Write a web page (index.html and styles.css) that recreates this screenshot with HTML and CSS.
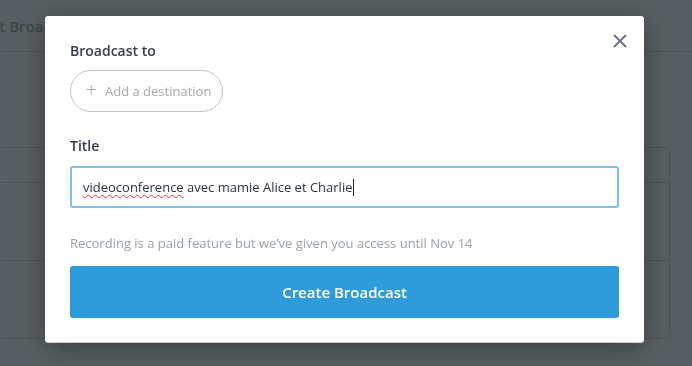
FILE: index.html
```html
<!DOCTYPE html>
<html lang="en">
<head>
<meta charset="utf-8">
<title>Create Broadcast</title>
<link rel="stylesheet" href="styles.css">
</head>
<body>
<div class="page">
  <header class="page-header"><h1 class="page-title">Start Broadcasts</h1></header>
  <div class="card">
    <div class="card-row card-head"></div>
    <div class="card-row"><span class="kebab">⋮</span></div>
    <div class="card-row"><span class="kebab">⋮</span></div>
  </div>
</div>
<div class="overlay">
  <div class="modal">
    <button class="close" aria-label="Close">
      <svg width="14" height="14" viewBox="0 0 14 14"><path d="M1 1L13 13M13 1L1 13" stroke="#6d7587" stroke-width="2" fill="none"/></svg>
    </button>
    <div class="label">Broadcast to</div>
    <button class="pill"><span class="plus">+</span>Add a destination</button>
    <div class="label title-label">Title</div>
    <div class="input"><span class="misspelled">videoconference</span>&nbsp;avec mamie Alice et Charlie<span class="caret"></span></div>
    <p class="note">Recording is a paid feature but we’ve given you access until Nov 14</p>
    <button class="primary">Create Broadcast</button>
  </div>
</div>
</body>
</html>
```
FILE: styles.css
```css
html, body {
  margin: 0;
  padding: 0;
  width: 692px;
  height: 366px;
  overflow: hidden;
  font-family: "Open Sans", "Noto Sans", sans-serif;
  background: #f4f5f5;
}
.page {
  height: 366px;
}
.page-header {
  height: 52px;
  border-bottom: 1px solid #c8cccd;
  box-sizing: border-box;
  display: flex;
  align-items: center;
}
.page-title {
  margin: 0 0 0 -30px;
  font-size: 15px;
  font-weight: 600;
  color: #888f92;
}
.card {
  margin: 95px 0 0 -20px;
  width: 690px;
  border: 1px solid #c6cacc;
  border-radius: 4px;
  box-sizing: border-box;
}
.card-row {
  height: 77px;
  border-top: 1px solid #c6cacc;
  display: flex;
  align-items: center;
  justify-content: flex-end;
  padding-right: 20px;
}
.card-head {
  height: 34px;
  border-top: 0;
}
.kebab {
  color: #8a9194;
  font-size: 18px;
  line-height: 1;
}
.overlay {
  position: fixed;
  inset: 0;
  background: rgba(38, 47, 51, 0.76);
  padding: 16px 0 0 45px;
  box-sizing: border-box;
}
.modal {
  position: relative;
  width: 599px;
  background: #fff;
  border-radius: 3px;
  padding: 25px 25px 24px;
  box-sizing: border-box;
  box-shadow: 0 1px 0 #c9cbcc, 0 6px 30px rgba(0, 0, 0, 0.35);
}
.close {
  position: absolute;
  top: 18px;
  right: 17px;
  width: 14px;
  height: 14px;
  padding: 0;
  border: 0;
  background: none;
  display: flex;
}
.label {
  font-size: 14px;
  line-height: 20px;
  font-weight: 600;
  color: #343d4b;
}
.pill {
  margin-top: 9px;
  height: 42px;
  width: 153px;
  border: 1px solid #c4c4c4;
  border-radius: 21px;
  background: #fff;
  font-family: inherit;
  font-size: 13px;
  color: #a9a9a9;
  display: flex;
  align-items: center;
  justify-content: center;
  gap: 8px;
  padding: 0 0 0 4px;
}
.plus {
  font-size: 20px;
  font-weight: 300;
  line-height: 1;
  margin-top: -2px;
}
.title-label {
  margin-top: 24px;
}
.input {
  margin-top: 10px;
  height: 42px;
  border: 2px solid #7cc0ea;
  border-radius: 3px;
  box-sizing: border-box;
  padding: 0 11px;
  display: flex;
  align-items: center;
  font-size: 13px;
  color: #2c333c;
}
.misspelled {
  text-decoration: underline wavy #e0383e;
  text-decoration-thickness: 1px;
  text-underline-offset: 2px;
}
.caret {
  width: 1px;
  height: 17px;
  background: #222;
  margin-left: 1px;
}
.note {
  margin: 25px 0 0;
  font-size: 13px;
  line-height: 20px;
  color: #9ba1a9;
}
.primary {
  margin-top: 13px;
  width: 100%;
  height: 52px;
  border: 0;
  border-radius: 3px;
  background: #2e9bda;
  color: #fff;
  font-family: inherit;
  font-size: 15px;
  font-weight: 600;
  display: block;
}
```
